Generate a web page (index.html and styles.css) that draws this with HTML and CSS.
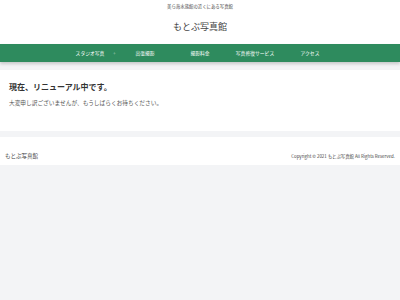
FILE: index.html
```html
<!DOCTYPE html>
<html lang="ja">
<head>
  <meta charset="utf-8">
  <title>もとぶ写真館</title>
  <link rel="stylesheet" href="styles.css">
</head>
<body>
  <header class="site-header">
    <p class="tagline">美ら海水族館の近くにある写真館</p>
    <div class="site-title">もとぶ写真館</div>
  </header>
  <nav class="global-nav">
    <ul>
      <li>スタジオ写真<span class="more">+</span></li>
      <li>出張撮影</li>
      <li>撮影料金</li>
      <li>写真修復サービス</li>
      <li>アクセス</li>
    </ul>
  </nav>

  <main class="content">
    <h1>現在、リニューアル中です。</h1>
    <p>大変申し訳ございませんが、もうしばらくお待ちください。</p>
  </main>

  <footer class="site-footer">
    <div class="footer-name">もとぶ写真館</div>
    <div class="copyright">Copyright © 2021 もとぶ写真館 All Rights Reserved.</div>
  </footer>
</body>
</html>
```

FILE: styles.css
```css
body {
  margin: 0;
  background-color: #f3f4f6;
  font-family: "Noto Sans CJK JP", "Noto Sans", sans-serif;
  color: #333;
}

.site-header {
  background: #fff;
  text-align: center;
}

.tagline {
  margin: 0;
  font-size: 4.4px;
  line-height: 12px;
  color: #444;
}

.site-title {
  font-size: 9px;
  line-height: 30px;
  padding-bottom: 2px;
  color: #444;
}

.global-nav {
  background-color: #2e8b5e;
  height: 18px;
  box-shadow: 0 2px 3px rgba(0, 0, 0, 0.18);
  position: relative;
}

.global-nav ul {
  list-style: none;
  margin: 0;
  padding: 0;
  display: flex;
  justify-content: center;
}

.global-nav li {
  width: 55px;
  text-align: center;
  font-size: 4.8px;
  line-height: 18px;
  color: #fff;
  position: relative;
}

.global-nav .more {
  position: absolute;
  right: 0;
  top: 0;
  width: 6px;
  text-align: center;
  color: rgba(255, 255, 255, 0.5);
  font-size: 5px;
}

.content {
  margin-top: 8px;
  background: #fff;
  padding: 11px 9px 24px;
}

.content h1 {
  margin: 0;
  font-size: 8px;
  line-height: 12px;
  font-weight: bold;
  color: #333;
}

.content p {
  margin: 6px 0 0;
  font-size: 5.7px;
  line-height: 8px;
  color: #555;
}

.site-footer {
  margin-top: 6px;
  background: #fff;
  padding: 15px 5px 5px;
  display: flex;
  justify-content: space-between;
  align-items: center;
  height: 8px;
}

.footer-name {
  font-size: 5.5px;
  line-height: 8px;
  color: #444;
}

.copyright {
  font-size: 4.4px;
  line-height: 8px;
  color: #444;
}
```
